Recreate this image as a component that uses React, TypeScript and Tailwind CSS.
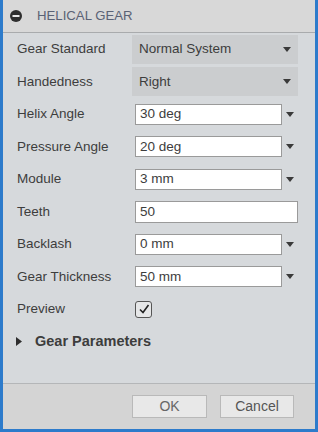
import React from "react";

const Arrow = () => (
  <svg width="8" height="5" viewBox="0 0 8 5" className="shrink-0">
    <path d="M0 0 L8 0 L4 5 Z" fill="#3a3a3a" />
  </svg>
);

const Row: React.FC<{ label: string; children: React.ReactNode }> = ({ label, children }) => (
  <div className="flex h-[32.5px] items-center">
    <div className="w-[129px] shrink-0 pl-[14px] text-[13.5px] text-[#3d3d3d]">{label}</div>
    <div className="flex flex-1 items-center">{children}</div>
  </div>
);

const Select: React.FC<{ value: string }> = ({ value }) => (
  <div className="flex h-[29px] w-[166px] items-center justify-between bg-[#cbcdcf] pl-[7px] pr-[7px] text-[13.5px] text-[#3d3d3d]">
    <span>{value}</span>
    <Arrow />
  </div>
);

const Combo: React.FC<{ value: string }> = ({ value }) => (
  <div className="flex items-center pl-[3px]">
    <div className="flex h-[21px] w-[147px] items-center border border-[#9a9a9a] bg-white pl-[4px] text-[13.5px] text-[#3d3d3d]">
      {value}
    </div>
    <div className="ml-[4px]">
      <Arrow />
    </div>
  </div>
);

export default function App() {
  return (
    <div
      className="flex h-[432px] w-[318px] flex-col border-b-[3px] border-l-[3px] border-r-[3px] border-[#2d7bcb] bg-[#d6d9dc]"
      style={{ fontFamily: '"Liberation Sans", Arial, sans-serif' }}
    >
      <div className="flex h-[33px] shrink-0 items-center border-b border-[#a9abad] bg-[#d8d8d8] pl-[7px]">
        <svg width="12" height="12" viewBox="0 0 12 12" className="shrink-0">
          <circle cx="6" cy="6" r="6" fill="#2e2e2e" />
          <rect x="2.5" y="5" width="7" height="2" fill="#e8e8e8" />
        </svg>
        <span className="ml-[15px] text-[13.2px] text-[#5a6275]">HELICAL GEAR</span>
      </div>
      <div className="flex flex-col">
        <Row label="Gear Standard">
          <Select value="Normal System" />
        </Row>
        <Row label="Handedness">
          <Select value="Right" />
        </Row>
        <Row label="Helix Angle">
          <Combo value="30 deg" />
        </Row>
        <Row label="Pressure Angle">
          <Combo value="20 deg" />
        </Row>
        <Row label="Module">
          <Combo value="3 mm" />
        </Row>
        <Row label="Teeth">
          <div className="pl-[3px]">
            <div className="flex h-[22px] w-[163px] items-center border border-[#9a9a9a] bg-white pl-[4px] text-[13.5px] text-[#3d3d3d]">
              50
            </div>
          </div>
        </Row>
        <Row label="Backlash">
          <Combo value="0 mm" />
        </Row>
        <Row label="Gear Thickness">
          <Combo value="50 mm" />
        </Row>
        <Row label="Preview">
          <div className="pl-[3px]">
            <div className="flex h-[17px] w-[17px] items-center justify-center rounded-[3px] border border-[#555] bg-[#e6e7e8]">
              <svg width="12" height="12" viewBox="0 0 12 12">
                <path d="M2 6.5 L5 9.5 L10.5 2" fill="none" stroke="#222" strokeWidth="1.6" />
              </svg>
            </div>
          </div>
        </Row>
        <div className="flex h-[32.5px] items-center pl-[13px]">
          <svg width="6" height="9" viewBox="0 0 6 9">
            <path d="M0 0 L6 4.5 L0 9 Z" fill="#2e2e2e" />
          </svg>
          <span className="ml-[13px] text-[14.5px] font-bold text-[#3d3d3d]">Gear Parameters</span>
        </div>
      </div>
      <div className="flex-1" />
      <div className="flex h-[46px] shrink-0 items-center justify-end gap-[13px] border-t border-[#b4b6b8] bg-[#d4d4d4] pr-[21px]">
        <div className="flex h-[23px] w-[75px] items-center justify-center border border-[#b9b9b9] bg-[#e8e8e8] text-[14px] text-[#666]">
          OK
        </div>
        <div className="flex h-[23px] w-[74px] items-center justify-center border border-[#b9b9b9] bg-[#e8e8e8] text-[14px] text-[#555]">
          Cancel
        </div>
      </div>
    </div>
  );
}
